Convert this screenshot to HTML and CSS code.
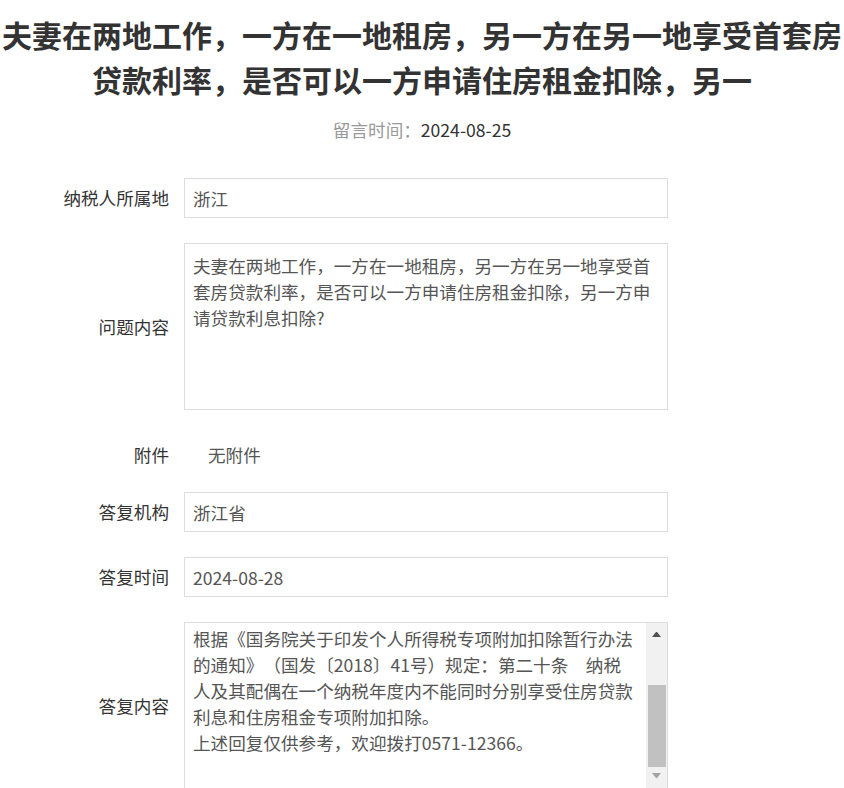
FILE: index.html
```html
<!DOCTYPE html>
<html lang="zh-CN">
<head>
    <meta charset="UTF-8">
    <meta name="viewport" content="width=device-width, initial-scale=1.0">
    <title>留言详情</title>
    <link rel="stylesheet" href="styles.css">
</head>
<body>
<h1 class="title">夫妻在两地工作，一方在一地租房，另一方在另一地享受首套房贷款利率，是否可以一方申请住房租金扣除，另一</h1>

<p class="meta"><span class="meta-label">留言时间：</span>2024-08-25</p>

<div class="form">
    <div class="form-row">
        <label class="form-label">纳税人所属地</label>
        <input class="form-input" type="text" value="浙江" readonly>
    </div>
    <div class="form-row">
        <label class="form-label">问题内容</label>
        <textarea class="form-textarea" readonly>夫妻在两地工作，一方在一地租房，另一方在另一地享受首套房贷款利率，是否可以一方申请住房租金扣除，另一方申请贷款利息扣除?</textarea>
    </div>
    <div class="form-row form-row-plain">
        <label class="form-label">附件</label>
        <span class="form-value">无附件</span>
    </div>
    <div class="form-row">
        <label class="form-label">答复机构</label>
        <input class="form-input" type="text" value="浙江省" readonly>
    </div>
    <div class="form-row">
        <label class="form-label">答复时间</label>
        <input class="form-input" type="text" value="2024-08-28" readonly>
    </div>
    <div class="form-row">
        <label class="form-label">答复内容</label>
        <div class="scroll-box">
            <div class="scroll-text">
                根据《国务院关于印发个人所得税专项附加扣除暂行办法的通知》（国发〔2018〕41号）规定：第二十条　纳税人及其配偶在一个纳税年度内不能同时分别享受住房贷款利息和住房租金专项附加扣除。<br>
                上述回复仅供参考，欢迎拨打0571-12366。
            </div>
            <div class="scrollbar">
                <span class="scroll-arrow up"></span>
                <span class="scroll-thumb"></span>
                <span class="scroll-arrow down"></span>
            </div>
        </div>
    </div>
</div>
</body>
</html>
```

FILE: styles.css
```css
body {
    margin: 0;
    font-family: "Noto Sans CJK SC", "Microsoft YaHei", sans-serif;
    font-size: 17.6px;
    color: #333;
    background-color: #fff;
    text-spacing-trim: space-all;
}

.title {
    margin: 12px 2px 0;
    font-size: 30px;
    font-weight: bold;
    line-height: 45px;
    text-align: center;
    color: #333;
}

.meta {
    margin: 15px 0 35px;
    line-height: 26px;
    text-align: center;
    color: #333;
}

.meta-label {
    color: #999;
}

.form-row {
    display: flex;
    align-items: center;
    margin-bottom: 25px;
}

.form-label {
    width: 169px;
    flex-shrink: 0;
    text-align: right;
    color: #333;
    line-height: 26px;
}

.form-input,
.form-textarea,
.scroll-box {
    box-sizing: border-box;
    width: 484px;
    margin: 0 0 0 15px;
    border: 1px solid #ddd;
    padding: 0 8px;
    font-family: inherit;
    font-size: 17.6px;
    color: #555;
    background-color: #fff;
    outline: none;
}

.form-input {
    height: 40px;
}

.form-textarea {
    height: 167px;
    padding: 9px 8px;
    line-height: 26px;
    resize: none;
    overflow: hidden;
}

.form-row-plain {
    height: 32px;
    align-items: flex-start;
    padding-top: 8px;
    box-sizing: border-box;
}

.form-row-plain .form-label,
.form-value {
    line-height: 24px;
}

.form-value {
    margin-left: 39px;
    color: #555;
}

/* reply box: text plus a drawn scrollbar */
.scroll-box {
    display: flex;
    height: 167px;
    padding: 0;
}

.scroll-text {
    flex: 1;
    overflow: hidden;
    padding: 3px 10px 0 8px;
    line-height: 26px;
}

.scrollbar {
    width: 21px;
    flex-shrink: 0;
    display: flex;
    flex-direction: column;
    align-items: center;
    background-color: #f1f1f1;
}

.scroll-arrow {
    width: 1px;
    height: 0;
    border-left: 4px solid transparent;
    border-right: 4px solid transparent;
}

.scroll-arrow.up {
    margin-top: 9px;
    border-bottom: 5px solid #505050;
}

.scroll-arrow.down {
    margin-top: 6px;
    border-top: 5px solid #a3a3a3;
}

.scroll-thumb {
    align-self: stretch;
    height: 82px;
    margin: 48px 1px 0 2px;
    background-color: #c1c1c1;
}
```
